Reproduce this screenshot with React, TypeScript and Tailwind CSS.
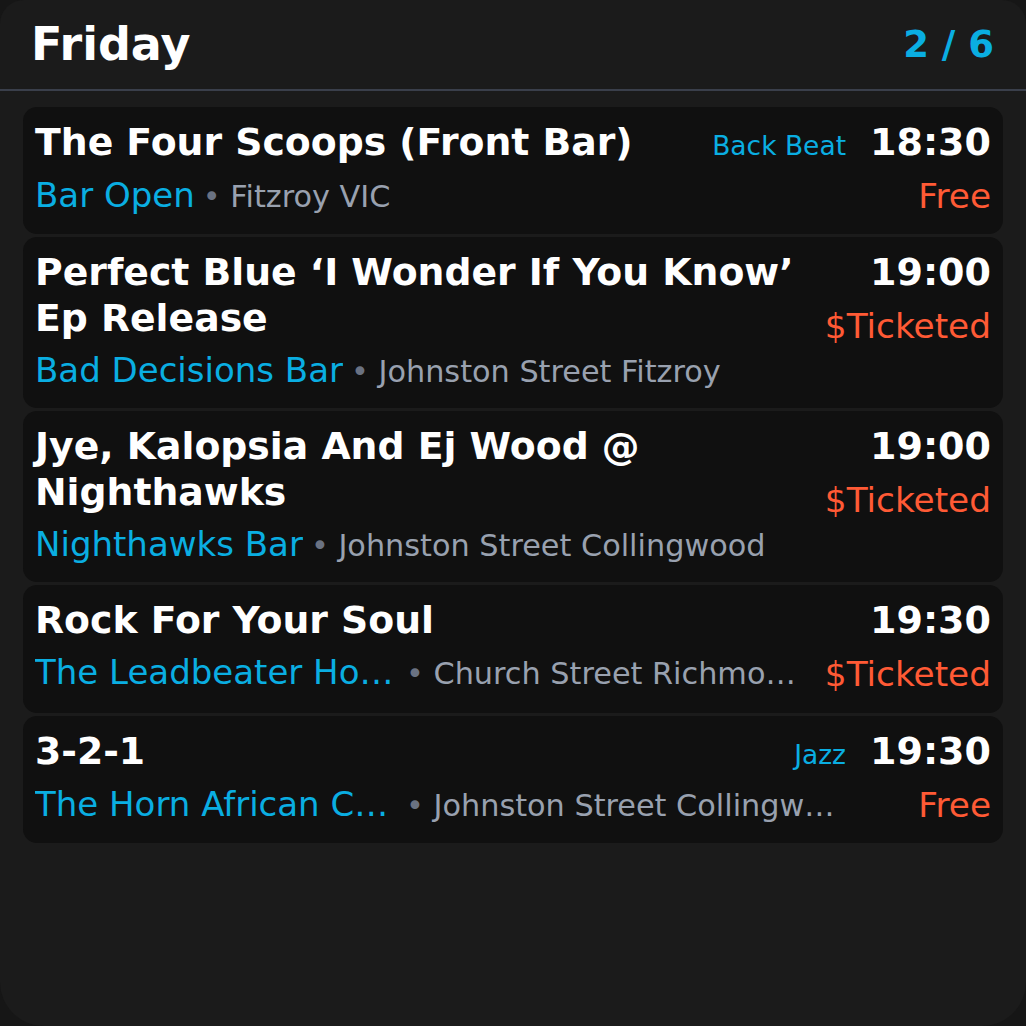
type Gig = {
  title: string;
  genre?: string;
  time: string;
  venue: string;
  location: string;
  price: string;
};

const gigs: Gig[] = [
  {
    title: "The Four Scoops (Front Bar)",
    genre: "Back Beat",
    time: "18:30",
    venue: "Bar Open",
    location: "Fitzroy VIC",
    price: "Free",
  },
  {
    title: "Perfect Blue \u2018I Wonder If You Know\u2019 Ep Release",
    time: "19:00",
    venue: "Bad Decisions Bar",
    location: "Johnston Street Fitzroy",
    price: "$Ticketed",
  },
  {
    title: "Jye, Kalopsia And Ej Wood @ Nighthawks",
    time: "19:00",
    venue: "Nighthawks Bar",
    location: "Johnston Street Collingwood",
    price: "$Ticketed",
  },
  {
    title: "Rock For Your Soul",
    time: "19:30",
    venue: "The Leadbeater Hotel",
    location: "Church Street Richmond",
    price: "$Ticketed",
  },
  {
    title: "3-2-1",
    genre: "Jazz",
    time: "19:30",
    venue: "The Horn African Cafe",
    location: "Johnston Street Collingwood",
    price: "Free",
  },
];

function GigCard({ gig }: { gig: Gig }) {
  return (
    <div className="flex gap-6 rounded-[14px] bg-[#101010] px-3 pt-3 pb-3">
      {/* left: title + where */}
      <div className="flex min-w-0 flex-1 flex-col">
        <div className="flex items-baseline gap-4">
          <div className="min-w-0 flex-1 text-[37.75px] font-bold leading-[46px] text-white">
            {gig.title}
          </div>
          {gig.genre && (
            <span className="shrink-0 whitespace-nowrap text-[26.5px] text-[#0aaee2]">
              {gig.genre}
            </span>
          )}
        </div>
        <div className="mt-1 flex items-baseline leading-normal">
          <span className="max-w-[363px] shrink-0 truncate text-[34px] text-[#0aaee2]">
            {gig.venue}
          </span>
          <span className="ml-2 min-w-0 truncate text-[30.3px] text-gray-400">
            <span className="text-gray-500">•</span> {gig.location}
          </span>
        </div>
      </div>

      {/* right: time + price */}
      <div className="flex shrink-0 flex-col items-end">
        <span className="text-[38px] font-bold leading-[46px] text-white">
          {gig.time}
        </span>
        <span className="mt-1.5 text-[34.3px] leading-normal text-[#ff5a35]">
          {gig.price}
        </span>
      </div>
    </div>
  );
}

export default function App() {
  return (
    <div
      className="h-[1026px] w-[1026px] bg-[#161616]"
      style={{ fontFamily: '"DejaVu Sans", "Liberation Sans", sans-serif' }}
    >
      <div className="flex h-full flex-col overflow-hidden rounded-t-[24px] rounded-b-[44px] bg-[#1b1b1b]">
        <header className="flex h-[91px] shrink-0 items-center justify-between border-b-2 border-[#3a3f4b] pl-[31px] pr-8">
          <h1 className="text-[46px] font-bold text-white">Friday</h1>
          <span className="text-[37px] font-bold text-[#0aaee2]">2 / 6</span>
        </header>

        <div className="flex flex-col gap-[3px] px-[23px] pt-4">
          {gigs.map((g) => (
            <GigCard key={g.title} gig={g} />
          ))}
        </div>
      </div>
    </div>
  );
}
